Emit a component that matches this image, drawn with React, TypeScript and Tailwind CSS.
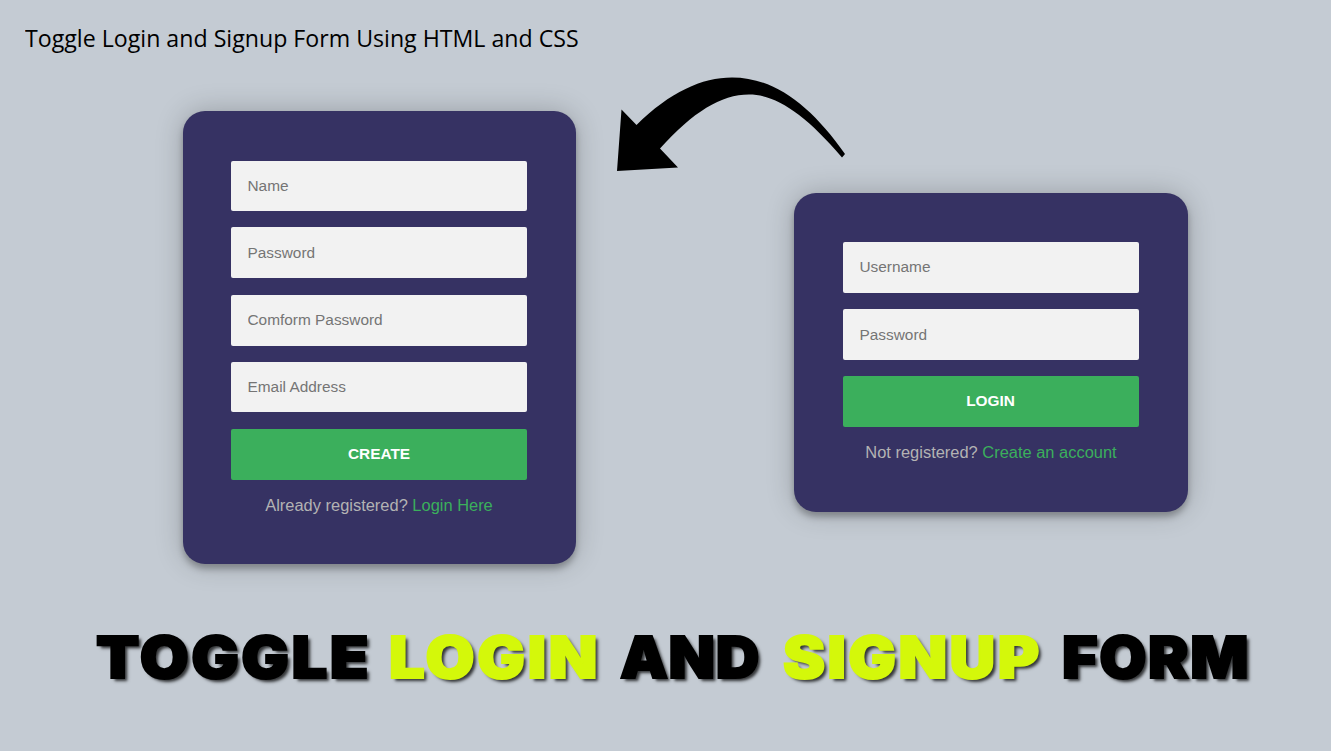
import type { ReactNode } from "react";

function Field({ label, type = "text", className }: { label: string; type?: string; className: string }) {
  return (
    <input
      type={type}
      placeholder={label}
      className={`block w-[296px] rounded-xs bg-[#f2f2f2] px-[16.5px] text-[15.4px] text-[#757575] outline-none placeholder:text-[#757575] ${className}`}
    />
  );
}

function Card({ className, children }: { className: string; children: ReactNode }) {
  return (
    <form
      className={`flex shrink-0 flex-col items-center rounded-[22px] bg-[#363263] shadow-[0_0_28px_rgba(0,0,0,0.22),0_5px_6px_rgba(0,0,0,0.26)] ${className}`}
    >
      {children}
    </form>
  );
}

function Submit({ children, className }: { children: ReactNode; className: string }) {
  return (
    <button
      type="button"
      className={`w-[296px] rounded-xs bg-[#3baf5c] pb-[2px] text-[15.4px] font-bold text-white ${className}`}
    >
      {children}
    </button>
  );
}

function Word({ children, className, stretch }: { children: ReactNode; className: string; stretch: string }) {
  return (
    <span className={`block shrink-0 whitespace-nowrap ${className}`}>
      <span className={`inline-block origin-left ${stretch}`}>{children}</span>
    </span>
  );
}

export default function App() {
  return (
    <main className="flex h-[751px] w-[1331px] flex-col overflow-hidden bg-[#c4cbd3] font-['Liberation_Sans',Arial,sans-serif]">
      <h1 className="h-[77px] pt-[22px] pl-[25px] font-['Open_Sans',sans-serif] text-[24px] leading-[32px] text-black">
        <span className="inline-block origin-left scale-x-[0.965] whitespace-nowrap">
          Toggle Login and Signup Form Using HTML and CSS
        </span>
      </h1>
      <section className="flex h-[543px] items-start pl-[183px]">
        <Card className="mt-[34px] h-[453px] w-[393px] pt-[50px] pr-px">
          <Field label="Name" className="h-[50px]" />
          <Field label="Password" type="password" className="mt-4 h-[51px]" />
          <Field label="Comform Password" type="password" className="mt-[17px] h-[51px] pb-[2px]" />
          <Field label="Email Address" type="email" className="mt-4 h-[50px]" />
          <Submit className="mt-[17px] h-[51px]">CREATE</Submit>
          <p className="mt-[15px] text-[16.45px] leading-[20px] text-[#b3b3b3]">
            Already registered? <a className="text-[#3baf5c]">Login Here</a>
          </p>
        </Card>
        <svg className="ml-[40px] h-[96px] w-[230px] shrink-0" viewBox="616 77 230 96" fill="#000">
          <path d="M617 171L621.500 109.500L636.500 125C670 92 702 77.500 732 77.500C775 77.500 811 106 845 154L842 157.500C805 114 776 94.500 749 94.500C721 94.500 693 112 660 148.500L678 167.500Z" />
        </svg>
        <Card className="mt-[116px] -ml-[52px] h-[319px] w-[394px] pt-[49px]">
          <Field label="Username" className="h-[51px] pb-[2px]" />
          <Field label="Password" type="password" className="mt-4 h-[51px]" />
          <Submit className="mt-4 h-[51px] pr-px">LOGIN</Submit>
          <p className="mt-[15px] text-[16.45px] leading-[20px] text-[#b3b3b3]">
            Not registered? <a className="text-[#3baf5c]">Create an account</a>
          </p>
        </Card>
      </section>
      <h2 className="flex pl-[96px] font-['Inter',sans-serif] text-[57.5px] leading-[75px] font-black text-black [-webkit-text-stroke:2px_currentColor] [text-shadow:3px_3px_3px_rgba(0,0,0,0.75)]">
        <Word className="w-[293px] tracking-[2.2px]" stretch="scale-x-[1.1]">TOGGLE</Word>
        <Word className="w-[231px] tracking-[2.4px] text-[#d4f80a]" stretch="scale-x-[1.1]">LOGIN</Word>
        <Word className="w-[163px] tracking-[0.6px]" stretch="scale-x-[1.05]">AND</Word>
        <Word className="w-[279px] tracking-[2.2px] text-[#d4f80a]" stretch="scale-x-[1.1]">SIGNUP</Word>
        <Word className="w-[190px] tracking-[1.5px]" stretch="scale-x-[1.06]">FORM</Word>
      </h2>
    </main>
  );
}
